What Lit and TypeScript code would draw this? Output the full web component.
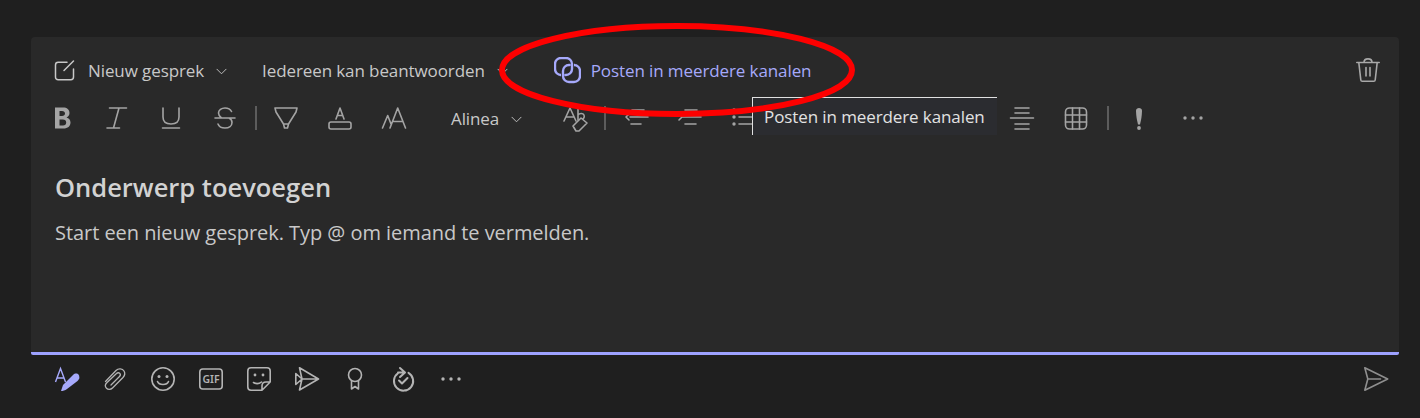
import { html, svg, css, LitElement } from 'lit';
import { customElement } from 'lit/decorators.js';

const line = (d: string) => svg`<path d=${d} fill="none" stroke="currentColor" stroke-width="1.6" stroke-linecap="round" stroke-linejoin="round"/>`;
const dot = (cx: number, cy: number, r = 1.7) => svg`<circle cx=${cx} cy=${cy} r=${r} fill="currentColor"/>`;

// every icon lives in a 24x24 box
const icons: Record<string, unknown> = {
  bold: svg`<path fill-rule="evenodd" fill="currentColor" d="M4 1.5h8c4 0 6.5 2 6.5 5.5 0 2.200-1.200 3.900-3 4.500 2.500.5 4 2.500 4 5 0 3.800-2.800 6-7 6H4zM8.500 5v5H11c1.900 0 3-1 3-2.500S12.900 5 11 5zM8.500 13.500v6H12c2 0 3.200-1 3.200-3s-1.200-3-3.300-3z"/>`,
  italic: svg`${line('M4.500 2h17M2 22h12.500M14 2L8.500 22')}`,
  underline: svg`${line('M4 2v9c0 4.500 3 7 8 7s8-2.500 8-7V2M3.500 22h17')}`,
  strike: svg`${line('M18.500 5.500C17.500 3.500 15 2 12 2 8.500 2 5.500 4 5.500 7c0 2 1 3.500 3 5M2 12h20M16 12c2 1 3 2.500 3 4.500 0 3.500-3 5.500-7 5.500-3.500 0-6-1.500-7-4')}`,
  highlight: svg`${line('M1 2h22M1 2l1 4 7.500 12h5L22 6l1-4M9.500 18l1 4h3l1-4')}`,
  fontcolor: svg`<rect x="1" y="16" width="22" height="7" rx="2" fill="none" stroke="currentColor" stroke-width="1.6"/>${line('M8 13l4-11 4 11M9.500 9.500h5')}`,
  fontsize: svg`${line('M.5 22L5.700 9.500 9 18M8 22l7.700-20L23.500 22M10.500 15.500h10.500')}`,
  clear: svg`${line('M2 15L8 2l6 13M4 11h8M16 3v11M16 9c1.500-2 5-2 6 0 1 2.500-1 5-4 5')}<path d="M11 20l8-8 6 5-8 8h-3z" fill="#292929" stroke="currentColor" stroke-width="1.6" stroke-linejoin="round"/>`,
  outdent: svg`${line('M9 4h12M7 11h18M8 18h10M6 8l-3 3 3 3')}`,
  indent: svg`${line('M8 4h12M5 11h19M8 18h11M2 8l3 3-3 3')}`,
  list: svg`${dot(3, 4)}${dot(3, 11)}${dot(3, 18)}${line('M8 4h16M8 11h16M8 18h16')}`,
  center: svg`${line('M5 2h14M5 7h14M0.500 12h23M5 18h14M5 23h14')}`,
  table: svg`<rect x="1.500" y="2" width="21" height="21" rx="4" fill="none" stroke="currentColor" stroke-width="1.6"/>${line('M8.500 2v21M15.500 2v21M1.500 9h21M1.500 16h21')}`,
  important: svg`<path d="M9 4.500c0-3.500 6-3.500 6 0 0 5-1 10-2 14h-2c-1-4-2-9-2-14z" fill="currentColor"/>${dot(12, 22, 1.9)}`,
  dots: svg`${dot(4, 12)}${dot(12, 12)}${dot(20, 12)}`,
  trash: svg`${line('M.8 4.500h22.400M2.800 4.500l2 17.500c.1.800.6 1.300 1.400 1.300h11.600c.8 0 1.300-.5 1.400-1.300l2-17.500M8 4.300C8 -.3 16-.3 16 4.300M10 9.500v8.500M14 9.500v8.500')}`,
  clip: svg`<path d="M2.500 14.500L13 3.500c2.500-2.500 6.500-2 8 .5 1.300 2.200.8 4.500-1 6.500L9.500 21c-1.800 1.800-4.500 1.800-6 .2-1.500-1.600-1.300-3.900.3-5.500L13.500 6.500c1-1 2.500-1 3.300-.1.800.9.700 2.100-.3 3.100L8 18" fill="none" stroke="currentColor" stroke-width="1.3" stroke-linecap="round" stroke-linejoin="round"/>`,
  smile: svg`<circle cx="12" cy="12" r="11.200" fill="none" stroke="currentColor" stroke-width="1.6"/>${dot(8, 9.5, 1.5)}${dot(16, 9.5, 1.5)}${line('M6.500 14.500c1.500 4 9.500 4 11 0')}`,
  gif: svg`<rect x=".8" y="2" width="22.400" height="20" rx="3" fill="none" stroke="currentColor" stroke-width="1.6"/><text x="12" y="16.200" text-anchor="middle" font-family="'Noto Sans', sans-serif" font-size="10.5" font-weight="600" fill="currentColor">GIF</text>`,
  sticker: svg`${line('M15 23.200H4c-2 0-3.200-1.200-3.200-3.200V4C.8 2 2 .8 4 .8h16c2 0 3.200 1.200 3.200 3.200v11zM15 23.200V19c0-2.500 1.500-4 4-4h4.200M6.500 15.500c2.500 1.500 5.500 1.500 8-.5')}${dot(8, 8, 1.4)}${dot(16, 8, 1.4)}`,
  stream: svg`${line('M4.500 .8L23.500 12 4.500 23l2.500-11zM7 12h16.500M.8 6.500v11L7 12z')}`,
  ribbon: svg`<circle cx="12" cy="8" r="6.500" fill="none" stroke="currentColor" stroke-width="1.6"/>${line('M8.500 14v8l3.500-2.500 3.500 2.500v-8')}`,
  loop: svg`<path d="M7 6.200a9.600 9.600 0 1 0 10.500-.4M7 5.500h6.500M9 1l5 4.500-5 4.500M8 13.500l3 3 5.500-5.500" fill="none" stroke="currentColor" stroke-width="2" stroke-linecap="round" stroke-linejoin="round"/>`,
  send: svg`${line('M.8 .8L23.700 12 .8 23.200 3.800 12zM3.800 12h12.700')}`,
};

const icon = (name: string) => html`<svg class="ic" viewBox="0 0 24 24">${icons[name]}</svg>`;
const slots = (names: string[]) => names.map((n) => html`<span class="slot">${icon(n)}</span>`);
const chevron = html`<svg class="chev" viewBox="0 0 12 7"><path d="M.7.7L6 6l5.300-5.300" fill="none" stroke="currentColor" stroke-width="1"/></svg>`;

@customElement('app-root')
export class AppRoot extends LitElement {
  static styles = css`
    :host {
      display: block;
      width: 1420px;
      height: 418px;
      overflow: hidden;
      position: relative;
      background: #1f1f1f;
      color: #c8c8c8;
      font-family: 'Open Sans', 'Noto Sans', sans-serif;
    }
    .page {
      padding: 37px 21px 0 31px;
    }
    .card {
      position: relative;
      height: 318px;
      box-sizing: border-box;
      background: #292929;
      border-radius: 4px 4px 2px 2px;
      border-bottom: 3px solid #9ea2ff;
      padding: 0 5px;
    }
    .top {
      display: flex;
      align-items: center;
      box-sizing: border-box;
      height: 68px;
      padding: 0 0 2px 18px;
      font-size: 17px;
      letter-spacing: -0.1px;
    }
    .ic {
      width: 24px;
      height: 24px;
      flex: none;
      overflow: visible;
    }
    .chev {
      width: 11px;
      height: 7px;
      flex: none;
    }
    .top .compose {
      width: 21px;
      height: 21px;
      margin-right: 13px;
    }
    .top .chev {
      margin: 2px 0 0 12px;
    }
    .reply {
      margin-left: 35px;
    }
    .post {
      display: flex;
      align-items: center;
      color: #a6a9fb;
      margin-left: 46px;
      gap: 10px;
    }
    .post svg {
      width: 27px;
      height: 27px;
    }
    .trash {
      margin-left: auto;
      margin-right: 14px;
      color: #a8a8a8;
    }
    .tools {
      display: flex;
      align-items: center;
      height: 26px;
      color: #a4a4a4;
    }
    .slot {
      width: 54px;
      display: flex;
      justify-content: center;
      flex: none;
    }
    .sep {
      width: 7px;
      height: 24px;
      flex: none;
      display: flex;
      justify-content: center;
    }
    .sep::before {
      content: '';
      width: 2px;
      background: #5c5c5c;
    }
    .sep.wide {
      width: 9px;
    }
    .para {
      display: flex;
      align-items: center;
      font-size: 17px;
      letter-spacing: -0.1px;
      color: #c8c8c8;
      margin-left: 30px;
      width: 96px;
      flex: none;
    }
    .para .chev {
      margin: 2px 0 0 12px;
    }
    .covered {
      width: 225px;
      flex: none;
    }
    .tip {
      position: absolute;
      left: 721px;
      top: 60px;
      width: 245px;
      height: 38px;
      box-sizing: border-box;
      background: #2b2c30;
      border-top: 1px solid #e0e0e0;
      border-left: 1px solid #e0e0e0;
      font-size: 17px;
      letter-spacing: -0.1px;
      line-height: 38px;
      padding-left: 11px;
      color: #e2e2e2;
      white-space: nowrap;
    }
    .body {
      padding: 40px 19px 0;
    }
    h2 {
      margin: 0;
      font-size: 25.5px;
      line-height: 32px;
      font-weight: 600;
      color: #d2d2d2;
    }
    p {
      margin: 17px 0 0;
      font-size: 20px;
      line-height: 26px;
      letter-spacing: -0.05px;
      color: #c8c8c8;
    }
    .bottom {
      display: flex;
      align-items: center;
      height: 26px;
      padding: 11px 11px 0 12px;
      color: #b4b4b4;
    }
    .bottom .slot {
      width: 48px;
    }
    .bottom .fmt {
      color: #a6a9fb;
    }
    .bottom .send {
      margin-left: auto;
      color: #8f8f8f;
    }
    .ring {
      position: absolute;
      left: 490px;
      top: 15px;
      width: 380px;
      height: 115px;
      pointer-events: none;
    }
  `;

  render() {
    return html`
      <div class="page">
        <div class="card">
          <div class="top">
            <svg class="ic compose" viewBox="0 0 21 21">
              <path d="M19.5 1L10 10.500M19.500 9v8c0 1.700-1 2.700-2.700 2.700H4.200c-1.700 0-2.700-1-2.700-2.700V5c0-1.700 1-2.700 2.700-2.700H13" fill="none" stroke="currentColor" stroke-width="1.5" stroke-linecap="round"/>
            </svg>
            <span>Nieuw gesprek</span>${chevron}
            <span class="reply">Iedereen kan beantwoorden</span>${chevron}
            <span class="post">
              <svg viewBox="0 0 27 27">
                <path d="M6.500 18H7a6 6 0 0 1-6-6V7a6 6 0 0 1 6-6h5a6 6 0 0 1 6 6v5a6 6 0 0 1-6 6h-.5M15.500 8H15M20.500 8H20a6 6 0 0 1 6 6v5a6 6 0 0 1-6 6h-5a6 6 0 0 1-6-6v-5a6 6 0 0 1 6-6" fill="none" stroke="currentColor" stroke-width="2.4" stroke-linecap="round"/>
              </svg>
              Posten in meerdere kanalen
            </span>
            <svg class="ic trash" viewBox="0 0 24 24">${icons.trash}</svg>
          </div>
          <div class="tools">
            ${slots(['bold', 'italic', 'underline', 'strike'])}
            <span class="sep"></span>
            ${slots(['highlight', 'fontcolor', 'fontsize'])}
            <span class="para">Alinea${chevron}</span>
            ${slots(['clear'])}
            <span class="sep"></span>
            ${slots(['outdent', 'indent', 'list'])}
            <span class="covered"></span>
            ${slots(['center', 'table'])}
            <span class="sep wide"></span>
            ${slots(['important', 'dots'])}
          </div>
          <div class="tip">Posten in meerdere kanalen</div>
          <div class="body">
            <h2>Onderwerp toevoegen</h2>
            <p>Start een nieuw gesprek. Typ @ om iemand te vermelden.</p>
          </div>
        </div>
        <div class="bottom">
          <span class="slot fmt">
            <svg class="ic" viewBox="0 0 24 24">
              <path d="M.5 15L5.500 1.500 10.500 15M2.500 11h6" fill="none" stroke="currentColor" stroke-width="1.4"/>
              <path d="M6 24l2-6L18 8c2-2 5-2 6 .5s0 4-1.500 5.500L12 22c-2 1.500-4 2-6 2z" fill="currentColor"/>
            </svg>
          </span>
          ${slots(['clip', 'smile', 'gif', 'sticker', 'stream', 'ribbon', 'loop', 'dots'])}
          <svg class="ic send" viewBox="0 0 24 24">${icons.send}</svg>
        </div>
      </div>
      <svg class="ring" viewBox="0 0 380 115">
        <ellipse cx="187" cy="55" rx="175" ry="44" fill="none" stroke="#fd0000" stroke-width="6"/>
      </svg>
    `;
  }
}
